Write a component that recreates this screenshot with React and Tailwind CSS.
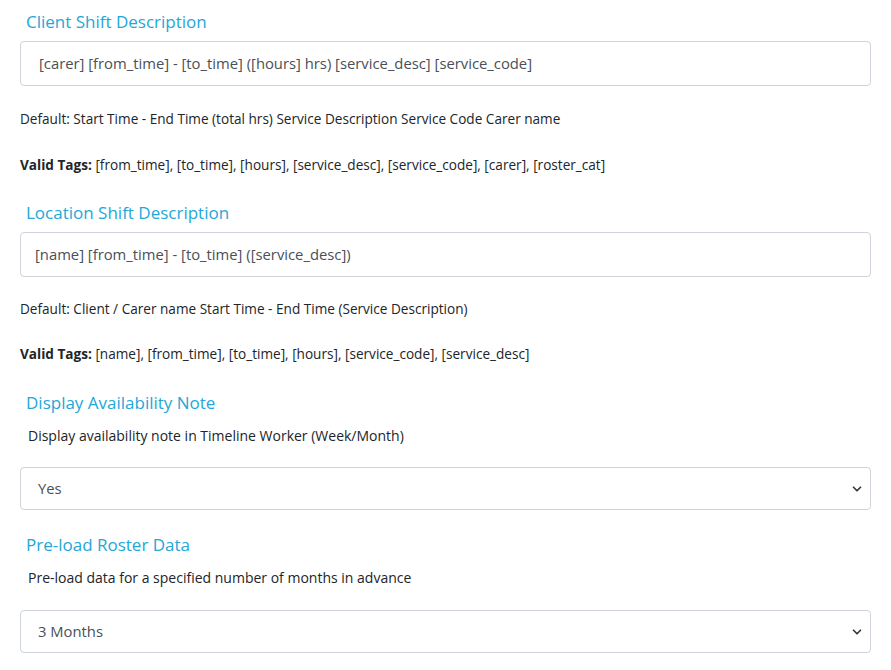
import { ChevronDown } from "lucide-react";

const font = { fontFamily: "'Open Sans', 'Noto Sans', sans-serif" };

const Heading = ({ children }) => (
  <h3 className="pl-[6px] text-[17px] leading-[24px] text-[#23a7d8]">{children}</h3>
);

const TextField = ({ value, pad }) => (
  <div
    className={`h-[45px] flex items-center rounded-[4px] border border-[#ced4da] bg-white text-[14.8px] text-[#495057] ${pad}`}
  >
    {value}
  </div>
);

const SelectField = ({ value }) => (
  <div className="h-[43px] flex items-center justify-between rounded-[4px] border border-[#ced4da] bg-white pl-[17px] pr-[6px] text-[14.8px] text-[#495057]">
    <span>{value}</span>
    <ChevronDown size={14} strokeWidth={3} className="text-[#343a40]" />
  </div>
);

export default function App() {
  return (
    <div className="bg-white w-[891px] h-[670px] px-[20px] pt-[10px] text-[#212529]" style={font}>
      {/* client shift */}
      <Heading>Client Shift Description</Heading>
      <div className="mt-[7px]">
        <TextField pad="pl-[18px]" value="[carer] [from_time] - [to_time] ([hours] hrs) [service_desc] [service_code]" />
      </div>
      <p className="mt-[24px] text-[13.6px] leading-[18px]">
        Default: Start Time - End Time (total hrs) Service Description Service Code Carer name
      </p>
      <p className="mt-[28px] text-[13.6px] leading-[18px]">
        <b>Valid Tags:</b> [from_time], [to_time], [hours], [service_desc], [service_code], [carer], [roster_cat]
      </p>

      {/* location shift */}
      <div className="mt-[27px]">
        <Heading>Location Shift Description</Heading>
      </div>
      <div className="mt-[7px]">
        <TextField pad="pl-[14px]" value="[name] [from_time] - [to_time] ([service_desc])" />
      </div>
      <p className="mt-[23px] text-[13.6px] leading-[18px]">
        Default: Client / Carer name Start Time - End Time (Service Description)
      </p>
      <p className="mt-[27px] text-[13.6px] leading-[18px]">
        <b>Valid Tags:</b> [name], [from_time], [to_time], [hours], [service_code], [service_desc]
      </p>

      {/* availability */}
      <div className="mt-[28px]">
        <Heading>Display Availability Note</Heading>
      </div>
      <p className="mt-[12px] pl-[8px] text-[14px] leading-[18px]">
        Display availability note in Timeline Worker (Week/Month)
      </p>
      <div className="mt-[22px]">
        <SelectField value="Yes" />
      </div>

      {/* preload */}
      <div className="mt-[23px]">
        <Heading>Pre-load Roster Data</Heading>
      </div>
      <p className="mt-[12px] pl-[8px] text-[14px] leading-[18px]">
        Pre-load data for a specified number of months in advance
      </p>
      <div className="mt-[23px]">
        <SelectField value="3 Months" />
      </div>
    </div>
  );
}
